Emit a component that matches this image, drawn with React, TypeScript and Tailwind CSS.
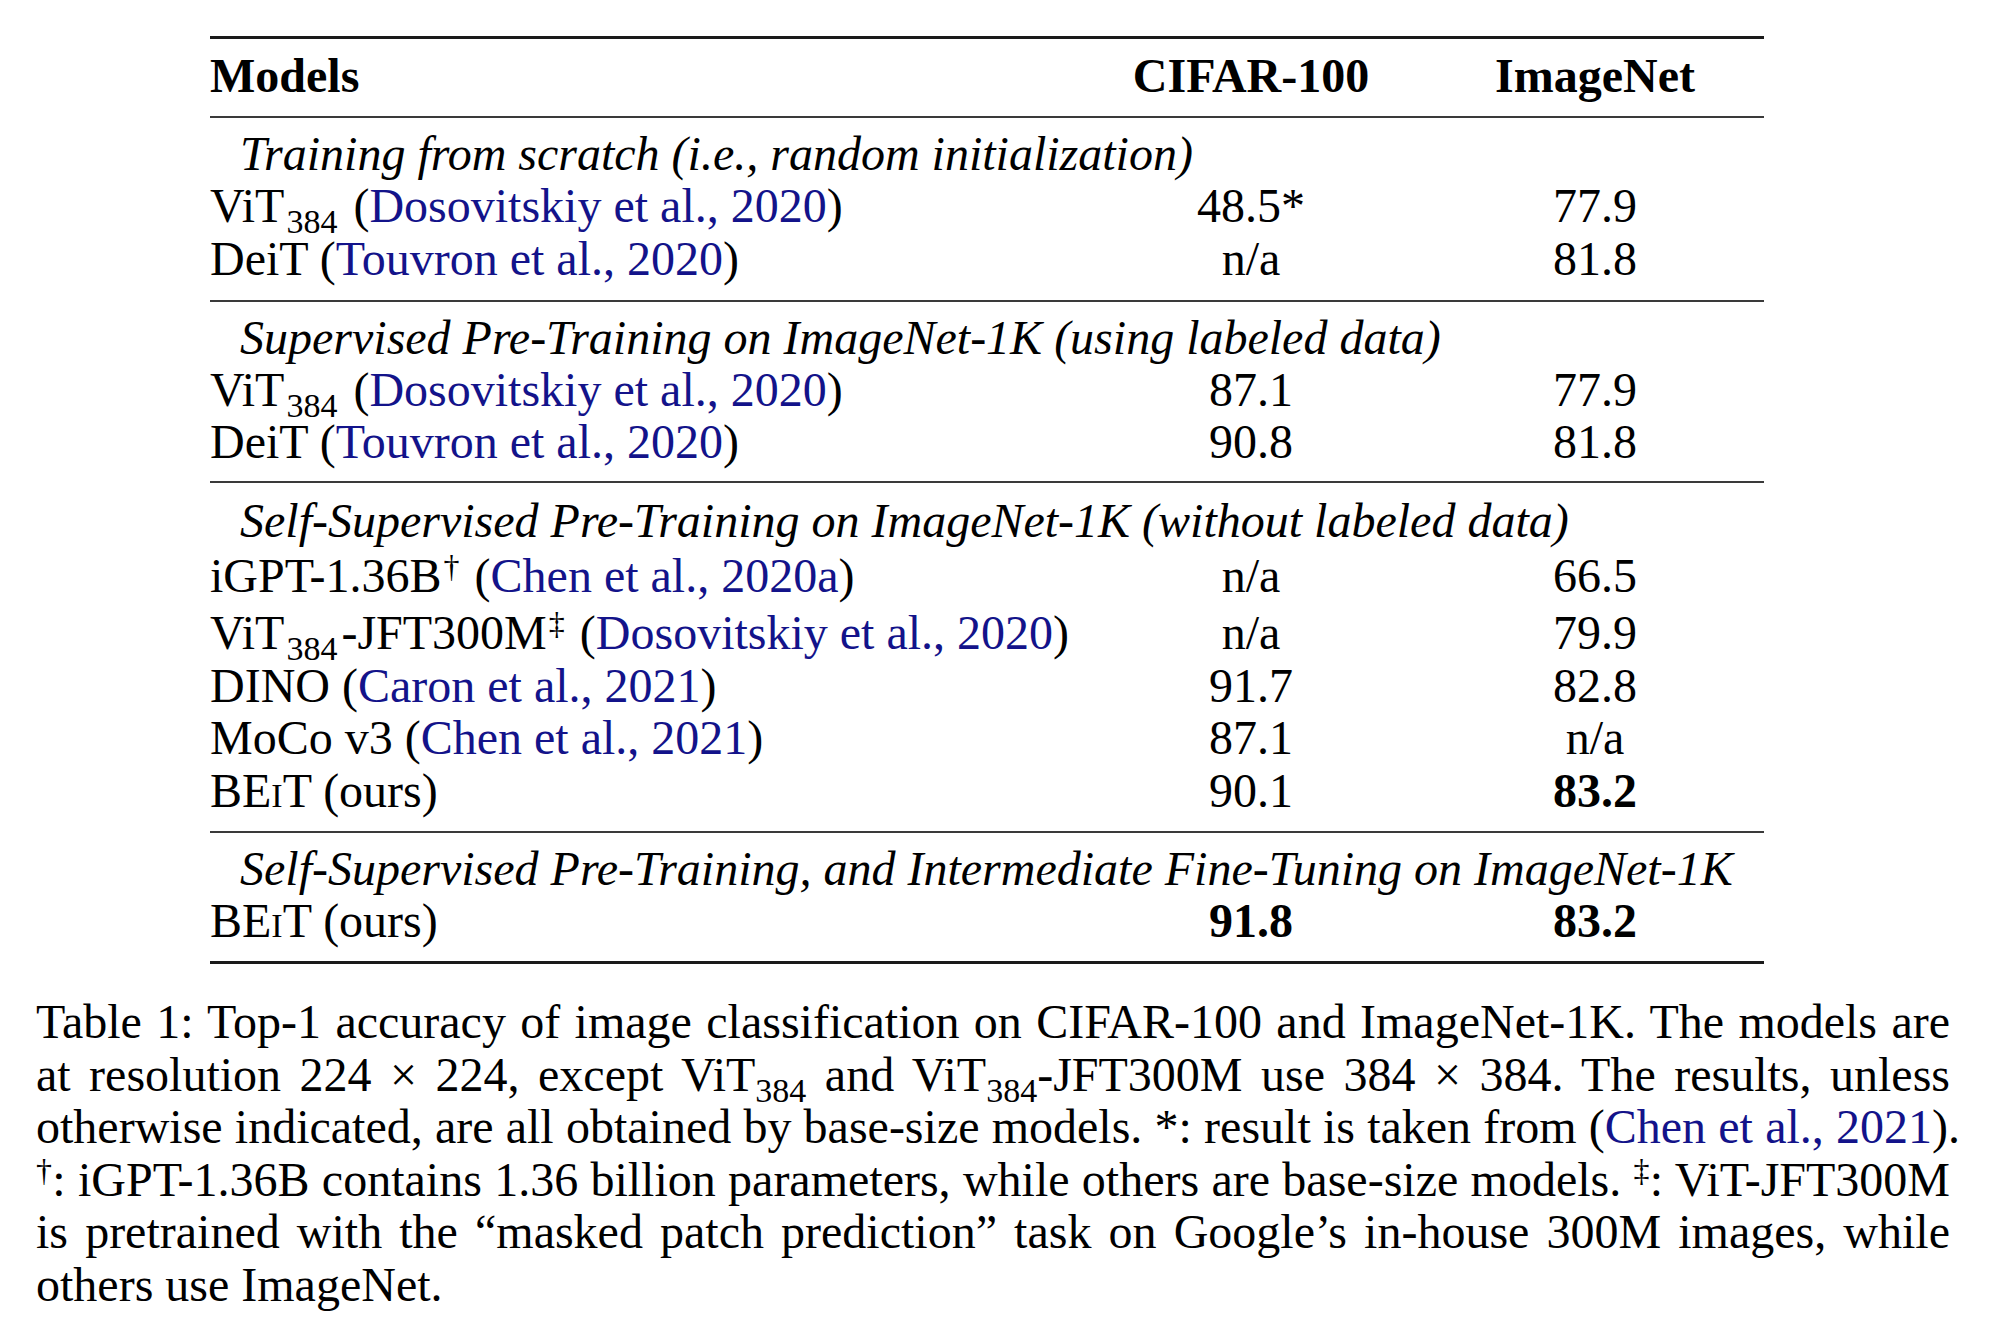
import React from "react";

const LINK = "text-[#13138a]";

function BEiT() {
  return (
    <>
      BE<span className="[font-variant:small-caps]">i</span>T
    </>
  );
}

function Sub({ children }: { children: React.ReactNode }) {
  return <span className="relative top-[11px] pl-[2px] pr-[4px] text-[34px] leading-none">{children}</span>;
}

function Sup({ children }: { children: React.ReactNode }) {
  return <span className="relative top-[-15px] pl-[2px] pr-[3px] text-[32px] leading-none">{children}</span>;
}

function CapSub({ children }: { children: React.ReactNode }) {
  return <span className="relative top-[11px] text-[34px] leading-none">{children}</span>;
}

function CapSup({ children }: { children: React.ReactNode }) {
  return <span className="relative top-[-15px] text-[32px] leading-none">{children}</span>;
}

function Cite({ children }: { children: React.ReactNode }) {
  return (
    <>
      (<span className={LINK}>{children}</span>)
    </>
  );
}

function Row({
  name,
  a,
  b,
  h = "h-[52.5px] leading-[52.5px]",
}: {
  name: React.ReactNode;
  a: React.ReactNode;
  b: React.ReactNode;
  h?: string;
}) {
  return (
    <div className={`grid grid-cols-[866px_350px_338px] ${h}`}>
      <div className="whitespace-nowrap">{name}</div>
      <div className="text-center whitespace-nowrap">{a}</div>
      <div className="text-center whitespace-nowrap">{b}</div>
    </div>
  );
}

function Section({ children }: { children: React.ReactNode }) {
  return <div className="h-[52px] leading-[52px] pl-[30px] italic whitespace-nowrap">{children}</div>;
}

function ThinRule() {
  return <div className="h-[2px] bg-[#3a3a3a]" />;
}

function ThickRule() {
  return <div className="h-[3px] bg-[#1a1a1a]" />;
}

function CapLine({ children, last = false, extra = "" }: { children: React.ReactNode; last?: boolean; extra?: string }) {
  return (
    <div
      className={`h-[52.6px] leading-[52.6px] ${
        last ? "text-left" : "text-justify [text-align-last:justify]"
      } ${extra}`}
    >
      {children}
    </div>
  );
}

export default function App() {
  return (
    <div className="min-h-[1320px] w-[2000px] bg-white text-black pt-[36px] pl-[36px] font-['Liberation_Serif','Times_New_Roman',serif] text-[48px]">
      <div className="ml-[174px] w-[1554px]">
        <ThickRule />
        <div className="pt-[11px] pb-[14px]">
          <div className="grid grid-cols-[866px_350px_338px] h-[52px] leading-[52px] font-bold">
            <div>Models</div>
            <div className="text-center">CIFAR-100</div>
            <div className="text-center">ImageNet</div>
          </div>
        </div>
        <ThinRule />
        <div className="pt-[10px] pb-[14.5px]">
          <Section>Training from scratch (i.e., random initialization)</Section>
          <Row
            name={
              <>
                ViT<Sub>384</Sub> <Cite>Dosovitskiy et al., 2020</Cite>
              </>
            }
            a="48.5*"
            b="77.9"
          />
          <Row
            name={
              <>
                DeiT <Cite>Touvron et al., 2020</Cite>
              </>
            }
            a="n/a"
            b="81.8"
          />
        </div>
        <ThinRule />
        <div className="pt-[10px] pb-[12.5px]">
          <Section>Supervised Pre-Training on ImageNet-1K (using labeled data)</Section>
          <Row
            name={
              <>
                ViT<Sub>384</Sub> <Cite>Dosovitskiy et al., 2020</Cite>
              </>
            }
            a="87.1"
            b="77.9"
          />
          <Row
            name={
              <>
                DeiT <Cite>Touvron et al., 2020</Cite>
              </>
            }
            a="90.8"
            b="81.8"
          />
        </div>
        <ThinRule />
        <div className="pt-[12px] pb-[14px]">
          <Section>Self-Supervised Pre-Training on ImageNet-1K (without labeled data)</Section>
          <Row
            h="h-[58px] leading-[58px]"
            name={
              <>
                iGPT-1.36B<Sup>†</Sup> <Cite>Chen et al., 2020a</Cite>
              </>
            }
            a="n/a"
            b="66.5"
          />
          <Row
            h="h-[56px] leading-[56px]"
            name={
              <>
                ViT<Sub>384</Sub>-JFT300M<Sup>‡</Sup> <Cite>Dosovitskiy et al., 2020</Cite>
              </>
            }
            a="n/a"
            b="79.9"
          />
          <Row
            h="h-[50px] leading-[50px]"
            name={
              <>
                DINO <Cite>Caron et al., 2021</Cite>
              </>
            }
            a="91.7"
            b="82.8"
          />
          <Row
            h="h-[54px] leading-[54px]"
            name={
              <>
                MoCo v3 <Cite>Chen et al., 2021</Cite>
              </>
            }
            a="87.1"
            b="n/a"
          />
          <Row
            h="h-[52px] leading-[52px]"
            name={
              <>
                <BEiT /> (ours)
              </>
            }
            a="90.1"
            b={<span className="font-bold">83.2</span>}
          />
        </div>
        <ThinRule />
        <div className="pt-[10px] pb-[14px]">
          <Section>Self-Supervised Pre-Training, and Intermediate Fine-Tuning on ImageNet-1K</Section>
          <Row
            h="h-[52px] leading-[52px]"
            name={
              <>
                <BEiT /> (ours)
              </>
            }
            a={<span className="font-bold">91.8</span>}
            b={<span className="font-bold">83.2</span>}
          />
        </div>
        <ThickRule />
      </div>

      <div className="mt-[32px] w-[1914px]">
        <CapLine>
          Table 1: Top-1 accuracy of image classification on CIFAR-100 and ImageNet-1K. The models are
        </CapLine>
        <CapLine>
          at resolution 224 × 224, except ViT<CapSub>384</CapSub> and ViT<CapSub>384</CapSub>-JFT300M use 384 × 384. The results, unless
        </CapLine>
        <CapLine extra="mr-[-10px]">
          otherwise indicated, are all obtained by base-size models. *: result is taken from <Cite>Chen et al., 2021</Cite>.
        </CapLine>
        <CapLine>
          <CapSup>†</CapSup>: iGPT-1.36B contains 1.36 billion parameters, while others are base-size models. <CapSup>‡</CapSup>: ViT-JFT300M
        </CapLine>
        <CapLine>
          is pretrained with the “masked patch prediction” task on Google’s in-house 300M images, while
        </CapLine>
        <CapLine last>others use ImageNet.</CapLine>
      </div>
    </div>
  );
}
